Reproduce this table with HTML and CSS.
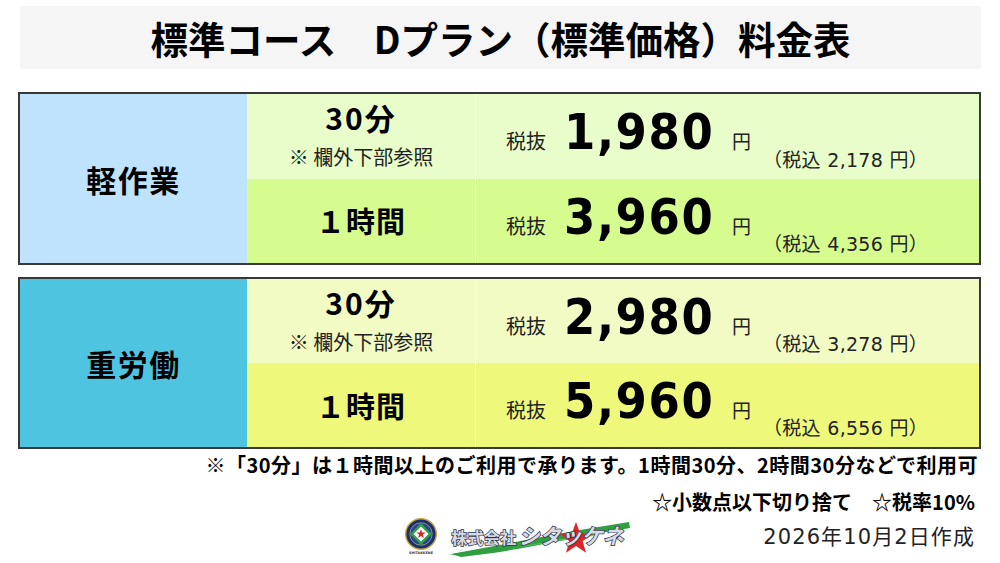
FILE: index.html
```html
<!DOCTYPE html>
<html lang="ja">
<head>
<meta charset="utf-8">
<title>標準コース Dプラン 料金表</title>
<link rel="stylesheet" href="styles.css">
</head>
<body>
<div class="page">
  <header class="title">標準コース　Dプラン（標準価格）料金表</header>

  <section class="plan plan-light">
    <div class="cat">軽作業</div>
    <div class="dur r1">
      <div class="dur-main">30分</div>
      <div class="dur-note">※ 欄外下部参照</div>
    </div>
    <div class="price r1">
      <span class="ex">税抜</span><span class="num">1,980</span><span class="yen">円</span><span class="inc">（税込 2,178 円）</span>
    </div>
    <div class="dur r2">
      <div class="dur-main hour">１時間</div>
    </div>
    <div class="price r2">
      <span class="ex">税抜</span><span class="num">3,960</span><span class="yen">円</span><span class="inc">（税込 4,356 円）</span>
    </div>
  </section>

  <section class="plan plan-heavy">
    <div class="cat">重労働</div>
    <div class="dur r1">
      <div class="dur-main">30分</div>
      <div class="dur-note">※ 欄外下部参照</div>
    </div>
    <div class="price r1">
      <span class="ex">税抜</span><span class="num">2,980</span><span class="yen">円</span><span class="inc">（税込 3,278 円）</span>
    </div>
    <div class="dur r2">
      <div class="dur-main hour">１時間</div>
    </div>
    <div class="price r2">
      <span class="ex">税抜</span><span class="num">5,960</span><span class="yen">円</span><span class="inc">（税込 6,556 円）</span>
    </div>
  </section>

  <footer class="notes">
    <p class="note note-main">※「30分」は１時間以上のご利用で承ります。1時間30分、2時間30分などで利用可</p>
    <p class="note note-sub">☆小数点以下切り捨て　☆税率10%</p>
    <div class="foot-row">
      <div class="logo">
        <svg class="emblem" viewBox="0 0 36 38" width="36" height="38">
          <circle cx="18" cy="16" r="15.3" fill="#1c2f6e" stroke="#c9a640" stroke-width="1.4"/>
          <circle cx="18" cy="16" r="11.2" fill="#27448f" stroke="#d8c27a" stroke-width="0.6"/>
          <polygon points="18,5 29,16 18,27 7,16" fill="#2f9e46"/>
          <polygon points="18,8.5 25.5,16 18,23.5 10.5,16" fill="#ffffff"/>
          <polygon points="18,11 19.18,14.38 22.76,14.45 19.90,16.62 20.94,20.05 18,18 15.06,20.05 16.10,16.62 13.24,14.45 16.82,14.38" fill="#d8262a"/>
          <rect x="4" y="32.6" width="28" height="4.6" fill="#ffffff"/>
          <text class="emblem-text" x="18" y="36.3" text-anchor="middle">SHITAKKENE</text>
        </svg>
        <div class="brand">
          <svg class="brand-bg" viewBox="0 0 184 40" width="184" height="40">
            <path d="M4,37 C50,29 100,18 182,5 L183,11 C140,18 96,28 46,36 L14,40 Z" fill="#2f9f40"/>
            <path d="M0,38 L34,32 L30,35 Z" fill="#2f9f40"/>
            <path d="M60,32 L150,16 L146,19 Z" fill="#5cbf5a"/>
            <polygon points="129,5 133.11,16.34 145.17,16.75 135.66,24.16 138.99,35.75 129,29 119.01,35.75 122.34,24.16 112.83,16.75 124.89,16.34" fill="#d8262a"/>
          </svg>
          <span class="brand-co">株式会社</span><span class="brand-name">シタッケネ</span>
        </div>
      </div>
      <div class="date">2026年10月2日作成</div>
    </div>
  </footer>
</div>
</body>
</html>
```

FILE: styles.css
```css
* {
  box-sizing: border-box;
}

html, body {
  margin: 0;
  padding: 0;
  background: #ffffff;
}

body {
  width: 1000px;
  height: 563px;
  overflow: hidden;
  font-family: "Noto Sans CJK JP", sans-serif;
  color: #111;
}

.page {
  padding: 6px 19px 0 18px;
}

.title {
  margin-left: 2px;
  height: 63px;
  background: #f5f5f5;
  border-radius: 3px;
  display: flex;
  align-items: center;
  justify-content: center;
  font-size: 37.5px;
  font-weight: 700;
  line-height: 1;
  color: #000;
}

.plan {
  display: grid;
  grid-template-columns: 227px 228px 1fr;
  grid-template-rows: 1fr 1fr;
  border: 2px solid #383838;
}

.plan-light {
  margin-top: 23px;
  height: 173px;
}

.plan-heavy {
  margin-top: 12px;
  height: 172px;
}

.cat {
  grid-row: 1 / span 2;
  display: flex;
  align-items: center;
  justify-content: center;
  font-size: 30px;
  font-weight: 700;
  letter-spacing: 1.5px;
  line-height: 1;
  color: #000;
}

.plan-light .cat { background: #bfe3fd; }
.plan-heavy .cat { background: #4fc4e1; }

.plan-light .r1 { background: #e8fdca; }
.plan-light .r2 { background: #d6fb8e; }
.plan-heavy .r1 { background: #f3fbc4; }
.plan-heavy .r2 { background: #eef87a; }

.dur {
  display: flex;
  flex-direction: column;
  align-items: center;
  justify-content: center;
  line-height: 1;
}

.dur-main {
  margin-top: -4px;
  font-size: 30px;
  font-weight: 700;
  letter-spacing: 2px;
  color: #000;
}

.dur-main.hour {
  margin-top: 0;
  font-size: 29px;
  letter-spacing: 1px;
}

.dur-note {
  margin-top: 15px;
  font-size: 20px;
  color: #222;
}

.price {
  border-left: 1px solid #ffffff;
  display: flex;
  align-items: baseline;
  padding: 13px 0 0 30px;
  line-height: 1;
}

.ex {
  width: 58px;
  font-size: 20px;
  color: #222;
}

.num {
  width: 168px;
  font-family: "DejaVu Sans Condensed", "DejaVu Sans", sans-serif;
  font-stretch: semi-condensed;
  font-size: 50px;
  font-weight: 700;
  letter-spacing: 1.6px;
  color: #000;
}

.yen {
  width: 31px;
  font-size: 19px;
  color: #222;
}

.inc {
  align-self: flex-end;
  margin-bottom: 9px;
  font-family: "DejaVu Sans", "Noto Sans CJK JP", sans-serif;
  font-size: 19px;
  letter-spacing: 0.3px;
  color: #222;
}

.notes {
  display: flex;
  flex-direction: column;
  align-items: flex-end;
  padding-right: 6px;
}

.note {
  margin: 0;
  font-weight: 700;
  line-height: 1;
  color: #000;
}

.note-main {
  margin-top: 6px;
  margin-right: -3px;
  font-size: 20px;
  letter-spacing: 0.5px;
}

.note-sub {
  margin-top: 17px;
  font-size: 20px;
}

.foot-row {
  margin-top: 4px;
  height: 42px;
  display: flex;
  align-items: center;
  gap: 132px;
}

.logo {
  display: flex;
  align-items: center;
  gap: 8px;
}

.emblem {
  display: block;
  flex-shrink: 0;
}

.emblem-text {
  font-family: "DejaVu Sans", sans-serif;
  font-size: 3.4px;
  font-weight: 700;
  fill: #333;
}

.brand {
  position: relative;
  flex-shrink: 0;
  width: 184px;
  height: 40px;
  display: flex;
  align-items: baseline;
  white-space: nowrap;
  padding: 8px 0 0 4px;
  line-height: 1;
}

.brand-bg {
  position: absolute;
  left: 0;
  top: 0;
  display: block;
}

.brand-co,
.brand-name {
  position: relative;
  flex-shrink: 0;
  font-weight: 700;
  color: #d6dae6;
  -webkit-text-stroke: 1.4px #2b2f44;
  paint-order: stroke fill;
}

.brand-co {
  font-size: 16px;
  letter-spacing: 0.3px;
}

.brand-name {
  margin-left: 2px;
  font-size: 21px;
  font-style: italic;
}

.date {
  font-family: "DejaVu Sans", "Noto Sans CJK JP", sans-serif;
  font-size: 21px;
  letter-spacing: 1.1px;
  line-height: 1;
  color: #222;
}
```
